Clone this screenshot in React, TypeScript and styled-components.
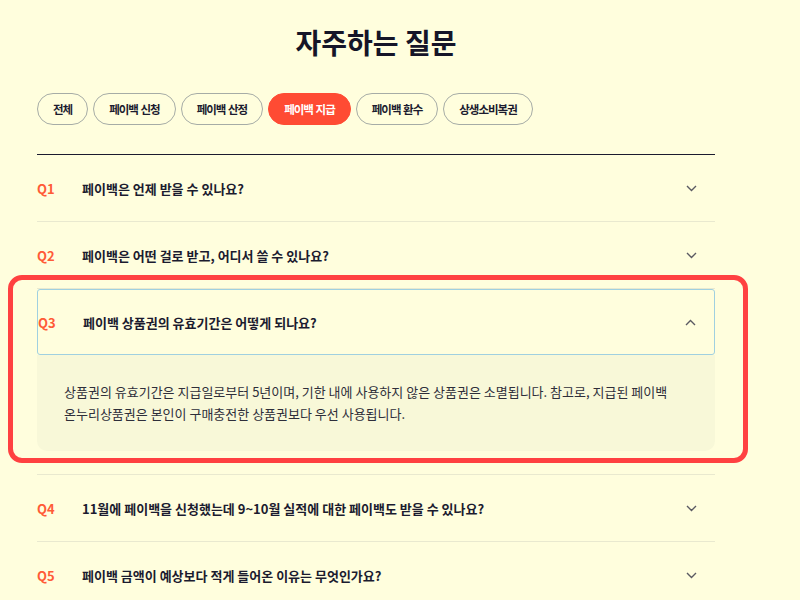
import { createGlobalStyle } from "styled-components";
import styled from "styled-components";

const GlobalStyle = createGlobalStyle`
  body {
    margin: 0;
    background: #fffedd;
    font-family: "Noto Sans CJK KR", "Noto Sans", sans-serif;
    color: #1b1b2f;
  }
`;

const Page = styled.div`
  width: 678px;
  padding: 24px 0 0 37px;
`;

const Title = styled.h1`
  margin: 0;
  font-size: 28px;
  line-height: 36px;
  font-weight: 700;
  text-align: center;
  color: #151528;
`;

const TabRow = styled.div`
  display: flex;
  gap: 5px;
  margin: 33px 0 29px;
`;

const Tab = styled.button<{ $active?: boolean }>`
  height: 32px;
  padding: 0 15px;
  border-radius: 16px;
  border: 1px solid ${({ $active }) => ($active ? "#ff4b33" : "#a6aca6")};
  background: ${({ $active }) => ($active ? "#ff4b33" : "transparent")};
  color: ${({ $active }) => ($active ? "#ffffff" : "#1b1b2f")};
  font-family: inherit;
  font-size: 11.5px;
  font-weight: 700;
  letter-spacing: -1px;
  word-spacing: 1px;
  cursor: pointer;
`;

const List = styled.div`
  border-top: 1px solid #1b1b2f;
`;

const Item = styled.div<{ $open?: boolean }>`
  position: relative;
  border-bottom: 1px solid #e9e9cf;
  padding-bottom: ${({ $open }) => ($open ? "23px" : "0")};
`;

const Question = styled.div<{ $open?: boolean }>`
  display: flex;
  align-items: center;
  height: 66px;
  box-sizing: border-box;
  padding-right: 18px;
  border: ${({ $open }) => ($open ? "1.5px solid #a0d0e0" : "none")};
  border-radius: 3px;
`;

const QLabel = styled.span`
  width: 45px;
  flex: none;
  font-size: 13px;
  font-weight: 700;
  color: #ff5b37;
`;

const QText = styled.span`
  flex: 1;
  font-size: 13px;
  font-weight: 700;
  color: #1b1b2f;
`;

const Answer = styled.div`
  padding: 26px 27px;
  background: #f8f8d8;
  border-radius: 0 0 10px 10px;
  font-size: 13px;
  line-height: 22px;
  color: #2e2e3a;
  word-break: keep-all;
`;

const Highlight = styled.div`
  position: absolute;
  left: -29px;
  top: -14px;
  right: -33px;
  bottom: 11px;
  border: 5px solid #ff4141;
  border-radius: 14px;
  pointer-events: none;
`;

function Chevron({ up }: { up?: boolean }) {
  return (
    <svg width="11" height="7" viewBox="0 0 11 7" fill="none">
      <polyline
        points={up ? "1,6 5.5,1.5 10,6" : "1,1 5.5,5.5 10,1"}
        stroke="#5a5a62"
        strokeWidth="1.4"
      />
    </svg>
  );
}

const tabs = ["전체", "페이백 신청", "페이백 산정", "페이백 지급", "페이백 환수", "상생소비복권"];

const faqs = [
  { q: "페이백은 언제 받을 수 있나요?" },
  { q: "페이백은 어떤 걸로 받고, 어디서 쓸 수 있나요?" },
  {
    q: "페이백 상품권의 유효기간은 어떻게 되나요?",
    a: "상품권의 유효기간은 지급일로부터 5년이며, 기한 내에 사용하지 않은 상품권은 소멸됩니다. 참고로, 지급된 페이백 온누리상품권은 본인이 구매충전한 상품권보다 우선 사용됩니다.",
  },
  { q: "11월에 페이백을 신청했는데 9~10월 실적에 대한 페이백도 받을 수 있나요?" },
  { q: "페이백 금액이 예상보다 적게 들어온 이유는 무엇인가요?" },
];

export default function App() {
  return (
    <>
      <GlobalStyle />
      <Page>
        <Title>자주하는 질문</Title>
        <TabRow>
          {tabs.map((t) => (
            <Tab key={t} $active={t === "페이백 지급"}>
              {t}
            </Tab>
          ))}
        </TabRow>
        <List>
          {faqs.map((f, i) => {
            const open = Boolean(f.a);
            return (
              <Item key={f.q} $open={open}>
                <Question $open={open}>
                  <QLabel>Q{i + 1}</QLabel>
                  <QText>{f.q}</QText>
                  <Chevron up={open} />
                </Question>
                {f.a && <Answer>{f.a}</Answer>}
                {open && <Highlight />}
              </Item>
            );
          })}
        </List>
      </Page>
    </>
  );
}
